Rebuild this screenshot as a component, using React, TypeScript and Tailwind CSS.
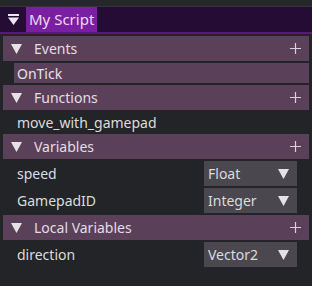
import type { ReactNode } from 'react'

const FONT = { fontFamily: '"Noto Sans", "Open Sans", sans-serif' }

function Tri({ className = '' }: { className?: string }) {
  return (
    <svg width="11" height="10" viewBox="0 0 11 10" className={className}>
      <path d="M0 0 H11 L5.5 10 Z" fill="#e6e1e8" />
    </svg>
  )
}

function Plus() {
  return (
    <svg width="11" height="11" viewBox="0 0 11 11" className="mr-[8px]">
      <path d="M5.5 0 V11 M0 5.5 H11" stroke="#d8d0da" strokeWidth="1.2" />
    </svg>
  )
}

function Section({ title }: { title: string }) {
  return (
    <div className="mt-[2px] flex h-[25px] items-center bg-[#5b4059] pl-[8px] text-[14px] text-[#e4dde6]">
      <Tri />
      <span className="ml-[12px] flex-1">{title}</span>
      <Plus />
    </div>
  )
}

function Select({ value }: { value: string }) {
  return (
    <div className="flex h-[25px] w-[93px] items-center justify-between bg-[#4a474e] pl-[4px] pr-[8px] text-[14px] text-[#dcdcdc]">
      <span>{value}</span>
      <Tri />
    </div>
  )
}

function Row({ label, children }: { label: string; children?: ReactNode }) {
  return (
    <div className="mt-[2px] flex h-[25px] items-center justify-between pl-[14px] pr-[12px] text-[14px] text-[#dcdcdc]">
      <span>{label}</span>
      {children}
    </div>
  )
}

export default function App() {
  return (
    <div className="h-[286px] w-[312px] overflow-hidden bg-[#222427]" style={FONT}>
      <div className="h-[6px] bg-[#25272b]" />
      <div className="h-[1px] bg-[#35333a]" />
      <div className="flex h-[27px] items-stretch border-b-2 border-[#58197a] bg-[#250c35]">
        <div className="flex w-[26px] items-center justify-center">
          <svg width="11" height="11" viewBox="0 0 11 11">
            <rect x="0" y="0" width="11" height="2" fill="#ece6ee" />
            <path d="M0 3.5 H11 L5.5 11 Z" fill="#ece6ee" />
          </svg>
        </div>
        <div className="flex items-center bg-[#7b1fa2] px-[3px] text-[15px] text-[#eadcf0]">
          My Script
        </div>
      </div>
      <div className="pl-[3px] pr-[3px]">
        <Section title="Events" />
        <div className="ml-[11px] mt-[2px] flex h-[20px] items-center bg-[#5b4059] pl-[3px] text-[14px] text-[#e8e2ea]">
          OnTick
        </div>
        <Section title="Functions" />
        <div className="mt-[2px] flex h-[20px] items-center pl-[14px] text-[14px] text-[#dcdcdc]">
          move_with_gamepad
        </div>
        <Section title="Variables" />
        <Row label="speed">
          <Select value="Float" />
        </Row>
        <Row label="GamepadID">
          <Select value="Integer" />
        </Row>
        <Section title="Local Variables" />
        <Row label="direction">
          <Select value="Vector2" />
        </Row>
      </div>
    </div>
  )
}
